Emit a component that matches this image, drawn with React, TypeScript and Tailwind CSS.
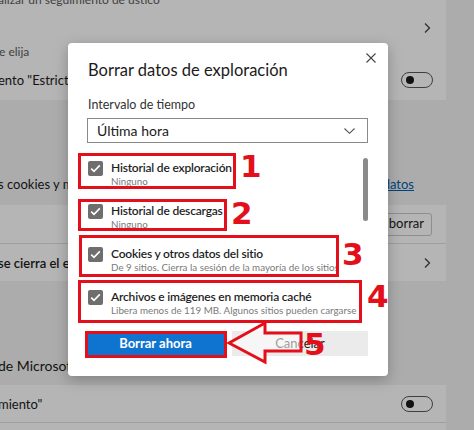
import React from "react";

function Chevron() {
  return (
    <svg width="8" height="12" viewBox="0 0 8 12" className="shrink-0">
      <polyline points="2,1.5 6.5,6 2,10.5" fill="none" stroke="#444" strokeWidth="1.3" />
    </svg>
  );
}

function Toggle() {
  return (
    <div className="flex h-[16px] w-[32px] shrink-0 items-center rounded-full border border-[#5a5a5a] pl-[4px]">
      <div className="h-[8px] w-[8px] rounded-full bg-[#1a1a1a]" />
    </div>
  );
}

function Check() {
  return (
    <div className="mt-[1px] flex h-[15px] w-[15px] shrink-0 items-center justify-center rounded-[2px] bg-[#6e6e6e]">
      <svg width="11" height="9" viewBox="0 0 11 9">
        <polyline points="1.2,4.6 4,7.4 9.8,1.4" fill="none" stroke="#fff" strokeWidth="1.6" />
      </svg>
    </div>
  );
}

function Item({ title, sub }: { title: string; sub: string }) {
  return (
    <div className="flex h-[30px] items-start gap-[8px]">
      <Check />
      <div className="flex flex-col">
        <div className="whitespace-nowrap text-[12px] font-semibold leading-[16px] tracking-[-0.2px] text-[#1f1f1f]">{title}</div>
        <div className="-mt-[1px] whitespace-nowrap text-[9.8px] leading-[13px] text-[#7a7a7a]">{sub}</div>
      </div>
    </div>
  );
}

export default function App() {
  return (
    <div className="relative h-[430px] w-[474px] overflow-hidden bg-[#f3f3f3] [font-family:Lato,'Open_Sans',sans-serif]">
      {/* background settings page */}
      <div className="flex w-[446px] flex-col">
        {/* card A */}
        <div className="flex h-[100px] flex-col bg-white">
          <div className="flex h-[44px] items-start justify-between">
            <div className="-mt-[8px] -ml-[2px] whitespace-nowrap text-[12px] leading-[16px] text-[#5c5c5c]">alizar un seguimiento de ústico</div>
            <div className="mr-[15px] mt-[22px]"><Chevron /></div>
          </div>
          <div className="h-[16px] -ml-[1px] whitespace-nowrap text-[12px] leading-[16px] text-[#5c5c5c]">e elija</div>
          <div className="flex h-[40px] items-center justify-between pr-[13px]">
            <div className="-ml-[2px] whitespace-nowrap text-[13px] leading-[16px] text-[#1b1b1b]">ento "Estricta" al explorar InPrivate</div>
            <Toggle />
          </div>
        </div>
        {/* gap area */}
        <div className="flex h-[105px] items-end justify-between pb-[13px] pr-[32px]">
          <div className="-ml-[2px] whitespace-nowrap text-[13px] leading-[16px] text-[#1b1b1b]">s cookies y mucho más</div>
          <div className="whitespace-nowrap text-[13px] leading-[16px] text-[#0060b0] underline">Administrar datos</div>
        </div>
        {/* card B */}
        <div className="flex flex-col bg-white">
          <div className="flex h-[38px] items-center justify-end pr-[14px]">
            <div className="flex h-[23px] items-center rounded-[3px] border border-[#c8c8c8] bg-white pl-[10px] pr-[7px] text-[13px] text-[#1b1b1b]">Elegir qué borrar</div>
          </div>
          <div className="flex h-[38px] items-center justify-between border-t border-[#e1e1e1] pr-[15px]">
            <div className="-ml-[2px] whitespace-nowrap text-[13px] font-semibold leading-[16px] text-[#1b1b1b]">se cierra el explorador</div>
            <Chevron />
          </div>
        </div>
        {/* gap area */}
        <div className="flex h-[104px] items-end pb-[11px]">
          <div className="-ml-[2px] whitespace-nowrap text-[14px] leading-[16px] text-[#1b1b1b]">de Microsoft Edge</div>
        </div>
        {/* card C */}
        <div className="flex flex-col bg-white">
          <div className="flex h-[37px] items-center justify-between pr-[13px]">
            <div className="-ml-[2px] whitespace-nowrap text-[13px] leading-[16px] text-[#1b1b1b]">miento"</div>
            <Toggle />
          </div>
          <div className="h-[30px] border-t border-[#e1e1e1]" />
        </div>
      </div>

      {/* dim overlay */}
      <div className="absolute inset-0 bg-black/[0.29]" />

      {/* dialog */}
      <div className="absolute left-[68px] top-[43px] flex h-[333px] w-[320px] flex-col rounded-[4px] bg-white px-[19px] shadow-[0_4px_14px_rgba(0,0,0,0.25)]">
        <button className="absolute right-[11px] top-[9px] flex h-[12px] w-[12px] items-center justify-center">
          <svg width="10" height="10" viewBox="0 0 10 10">
            <path d="M0.5 0.5 L9.5 9.5 M9.5 0.5 L0.5 9.5" stroke="#444" strokeWidth="1.1" />
          </svg>
        </button>
        <div className="mt-[15px] ml-[1px] whitespace-nowrap text-[16.5px] leading-[24px] text-[#1b1b1b]">Borrar datos de exploración</div>
        <div className="mt-[15px] ml-[1px] text-[12.5px] leading-[16px] text-[#333]">Intervalo de tiempo</div>
        <div className="mt-[5px] flex h-[25px] w-[281px] items-center justify-between border border-[#8a8a8a] pl-[9px] pr-[12px]">
          <span className="text-[14px] text-[#1b1b1b]">Última hora</span>
          <svg width="11" height="6" viewBox="0 0 11 6">
            <polyline points="0.5,0.5 5.5,5.3 10.5,0.5" fill="none" stroke="#555" strokeWidth="1.1" />
          </svg>
        </div>
        <div className="relative mt-[17px] flex flex-col gap-[13px] pl-[1px]">
          <Item title="Historial de exploración" sub="Ninguno" />
          <Item title="Historial de descargas" sub="Ninguno" />
          <Item title="Cookies y otros datos del sitio" sub="De 9 sitios. Cierra la sesión de la mayoría de los sitios" />
          <Item title="Archivos e imágenes en memoria caché" sub="Libera menos de 119 MB. Algunos sitios pueden cargarse" />
          <div className="absolute left-[276px] -top-[2px] h-[63px] w-[5px] rounded-full bg-[#8a8a8a]" />
        </div>
        <div className="mt-[12px] flex gap-[8px]">
          <button className="flex h-[25px] w-[137px] items-center justify-center bg-[#0f74d0] text-[13px] font-bold text-white">Borrar ahora</button>
          <button className="flex h-[25px] w-[136px] items-center justify-center bg-[#ebebeb] text-[13px] text-[#1b1b1b]">Cancelar</button>
        </div>
      </div>

      {/* annotations */}
      <div className="absolute left-[78px] top-[153px] h-[36px] w-[158px] border-[3px] border-[#e3101c]" />
      <div className="absolute left-[78px] top-[199px] h-[32px] w-[149px] border-[3px] border-[#e3101c]" />
      <div className="absolute left-[79px] top-[235px] h-[42px] w-[260px] border-[3px] border-[#e3101c]" />
      <div className="absolute left-[78px] top-[280px] h-[43px] w-[284px] border-[3px] border-[#e3101c]" />
      <div className="absolute left-[85px] top-[331px] h-[27px] w-[142px] border-[3px] border-[#e3101c]" />
      <svg className="absolute left-[226px] top-[320px]" width="80" height="46" viewBox="0 0 80 46">
        <polygon points="3,23 39,3 39,13 75,13 75,31 39,31 39,42" fill="#fff" fillOpacity="0.55" stroke="#e3101c" strokeWidth="3" strokeLinejoin="miter" />
      </svg>
      <div className="absolute left-[240px] top-[151px] text-[31px] font-bold leading-none text-[#e3101c] [font-family:'DejaVu_Sans',sans-serif]">1</div>
      <div className="absolute left-[231px] top-[198px] text-[31px] font-bold leading-none text-[#e3101c] [font-family:'DejaVu_Sans',sans-serif]">2</div>
      <div className="absolute left-[342px] top-[239px] text-[31px] font-bold leading-none text-[#e3101c] [font-family:'DejaVu_Sans',sans-serif]">3</div>
      <div className="absolute left-[367px] top-[281px] text-[31px] font-bold leading-none text-[#e3101c] [font-family:'DejaVu_Sans',sans-serif]">4</div>
      <div className="absolute left-[304px] top-[329px] text-[31px] font-bold leading-none text-[#e3101c] [font-family:'DejaVu_Sans',sans-serif]">5</div>
    </div>
  );
}
